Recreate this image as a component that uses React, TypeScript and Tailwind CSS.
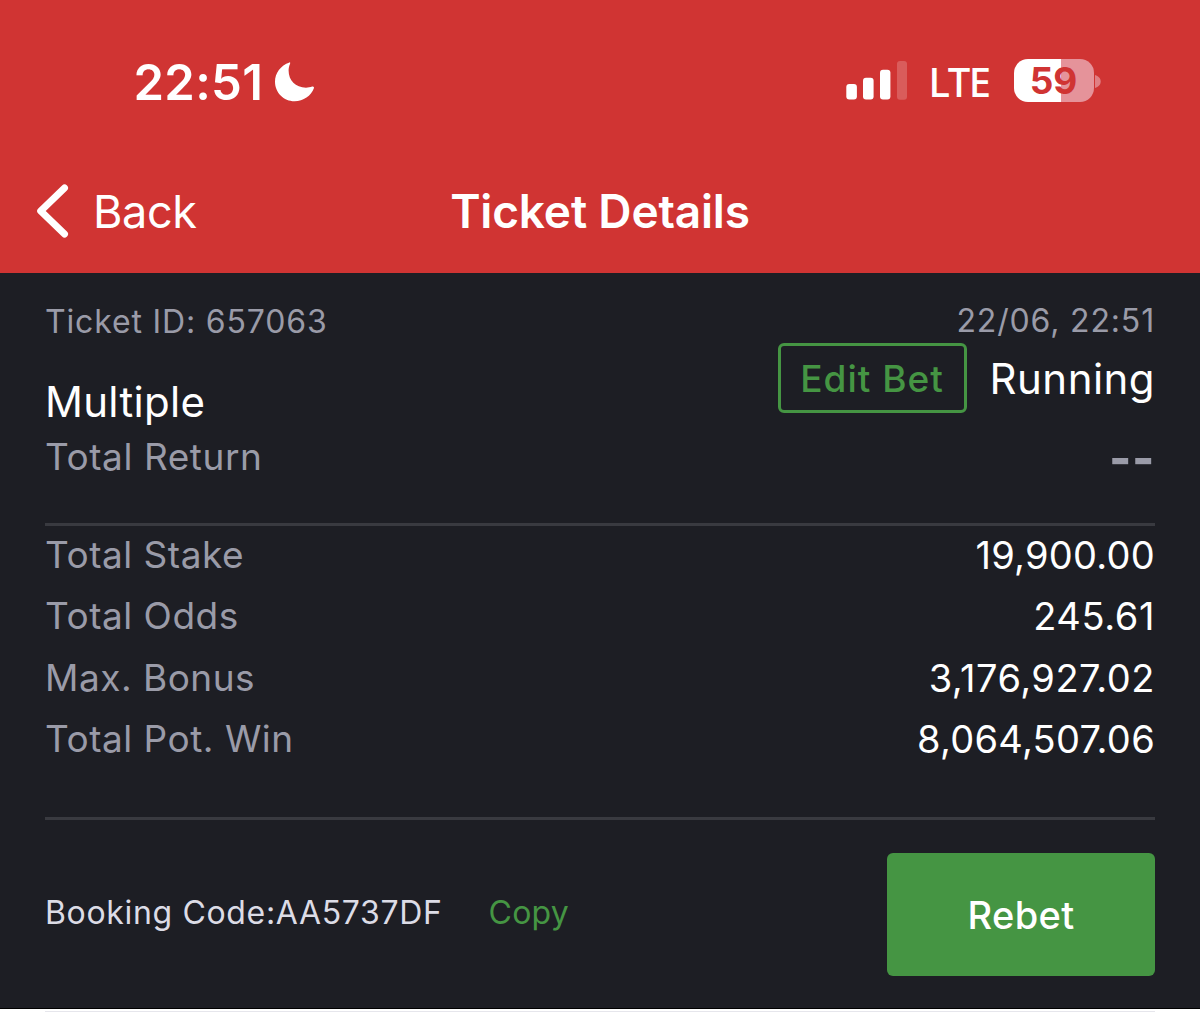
const summary = [
  { label: 'Total Stake', value: '19,900.00', spacing: 'tracking-[0.25px]' },
  { label: 'Total Odds', value: '245.61', spacing: 'tracking-[0.6px]' },
  { label: 'Max. Bonus', value: '3,176,927.02', spacing: 'tracking-[0.5px]' },
  { label: 'Total Pot. Win', value: '8,064,507.06', spacing: 'tracking-[0.3px]' },
];

function MoonIcon() {
  return (
    <svg className="mt-px ml-[12px] h-[40px] w-[40px]" viewBox="0 0 40 40" fill="white">
      <path d="M14.5.4C5.5 3.5 0 11 0 19.7 0 30.5 8.7 39.2 19.6 39.2 28.5 39.2 36 34 38.9 26.3 39.3 25 38.4 24.2 37.2 24.6 35.3 25.4 33 25.7 31 25.7 20.5 25.7 13.6 18.6 13.6 8.6 13.6 6.4 14.1 4 15 2 15.5.8 15 .2 14.5.4Z" />
    </svg>
  );
}

function SignalIcon() {
  return (
    <svg className="h-[40px] w-[62px]" viewBox="0 0 62 40" fill="white">
      <rect x="0.3" y="23" width="10.6" height="15.5" rx="3" />
      <rect x="17" y="16.7" width="10.6" height="21.8" rx="3" />
      <rect x="34" y="8.7" width="10.4" height="29.8" rx="3" />
      <rect x="51" y="0" width="10" height="38.8" rx="3" opacity="0.2" />
    </svg>
  );
}

function Battery() {
  return (
    <div className="flex items-center">
      <div className="mb-px flex h-[43px] w-[80px] items-center justify-center rounded-[14px] bg-[linear-gradient(to_right,#fff_47px,#e5939a_47px)] pb-px text-[37px] leading-none font-bold text-[#d03433]">
        59
      </div>
      <svg className="ml-px h-[13px] w-[6px]" viewBox="0 0 6 13" fill="#e07f84">
        <path d="M0 0C3.4.9 5.7 3.4 5.7 6.5S3.4 12.1 0 13Z" />
      </svg>
    </div>
  );
}

export default function App() {
  return (
    <div className="flex h-[1027px] w-[1200px] flex-col overflow-hidden bg-white font-['Inter',sans-serif]">
      <header className="h-[273px] shrink-0 bg-[#d03433] text-white">
        <div className="flex h-[150px] items-center justify-between pt-[12px] pr-[99.5px] pl-[133.5px]">
          <div className="flex items-center">
            <span className="pt-[2px] text-[49px] leading-none font-semibold tracking-[0.3px]">22:51</span>
            <MoonIcon />
          </div>
          <div className="flex items-center">
            <SignalIcon />
            <span className="ml-[21px] w-[85px] pt-[2px] font-['Noto_Sans',sans-serif] text-[40px] leading-[40px] font-medium tracking-[-1.4px]">LTE</span>
            <Battery />
          </div>
        </div>
        <div className="grid h-[121px] grid-cols-[1fr_auto_1fr] items-center">
          <button className="flex items-center pl-[36px]">
            <svg className="h-[54px] w-[34px]" viewBox="0 0 34 54" fill="none" stroke="white" strokeWidth="7" strokeLinecap="round" strokeLinejoin="round">
              <path d="M28.5 4L4.7 27L28.5 50" />
            </svg>
            <span className="ml-[23px] pt-px text-[45px] leading-none tracking-[-0.35px]">Back</span>
          </button>
          <h1 className="text-[46px] leading-none font-semibold tracking-[-0.17px]">Ticket Details</h1>
        </div>
      </header>

      <main className="flex h-[736px] shrink-0 flex-col border-b border-black bg-[#1d1e24] px-[45px] text-[#9a9ba8]">
        <div className="mt-[26px] flex h-[44px] items-center justify-between text-[32px] leading-none tracking-[0.84px]">
          <span className="pt-[2px]">Ticket ID: 657063</span>
          <span>22/06, 22:51</span>
        </div>
        <div className="flex h-[180px] justify-between">
          <div className="pt-[33px]">
            <div className="text-[42px] leading-[51px] tracking-[0.3px] text-white">Multiple</div>
            <div className="text-[37px] leading-[59px] tracking-[0.55px]">Total Return</div>
          </div>
          <div>
            <div className="flex h-[70px] items-center">
              <button className="h-[70px] w-[189px] rounded-[6px] border-[3px] border-[#459543] text-[37px] leading-none font-medium tracking-[1px] text-[#459543]">Edit Bet</button>
              <span className="ml-[23px] pt-[2px] text-[42px] leading-[50px] tracking-[0.45px] text-white">Running</span>
            </div>
            <div className="scale-y-110 pt-[15px] text-right text-[48px] leading-[60px] font-bold tracking-[0.5px]">--</div>
          </div>
        </div>
        <div className="h-[3px] shrink-0 bg-[#393a40]" />
        <dl className="-mt-px flex h-[292px] flex-col text-[37px] leading-[61.4px]">
          {summary.map(({ label, value, spacing }) => (
            <div key={label} className="flex justify-between">
              <dt className="-mt-px tracking-[0.5px]">{label}</dt>
              <dd className={`text-[38px] text-white ${spacing}`}>{value}</dd>
            </div>
          ))}
        </dl>
        <div className="h-[3px] shrink-0 bg-[#393a40]" />
        <div className="flex items-center pt-[33px] text-[32px] leading-none">
          <span className="-mt-[4px] tracking-[0.66px] text-[#dcdce6]">Booking Code:AA5737DF</span>
          <button className="-mt-[4px] ml-[46px] tracking-[0.2px] text-[#459543]">Copy</button>
          <button className="ml-auto h-[123px] w-[268px] rounded-[6px] bg-[#459543] text-[38px] font-medium tracking-[0.4px] text-white">Rebet</button>
        </div>
      </main>
      <div className="mx-[45px] mt-[2px] h-px bg-[#e6e6ec]" />
    </div>
  );
}
